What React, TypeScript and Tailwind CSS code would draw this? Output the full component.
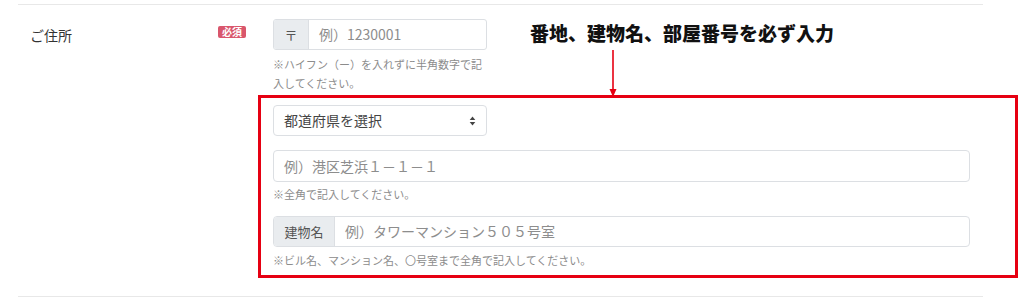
import React from "react";

const font = { fontFamily: '"Noto Sans CJK JP", "Noto Sans", sans-serif' };

const Help = ({ children }: { children: React.ReactNode }) => (
  <p className="text-[11px] leading-[19px] text-[#8c8c8c]">{children}</p>
);

const SelectArrows = () => (
  <svg width="7" height="10" viewBox="0 0 7 10" fill="#444">
    <path d="M3.5 0.5 L6.3 4 H0.7 Z" />
    <path d="M3.5 9.5 L6.3 6 H0.7 Z" />
  </svg>
);

const App = () => {
  return (
    <div
      className="relative w-[1024px] h-[299px] bg-white overflow-hidden text-[#333]"
      style={font}
    >
      <div className="ml-[18px] w-[965px] mt-[4px] border-t border-[#e8e8e8]" />

      <div className="flex ml-[18px] w-[965px] pt-[14px] pb-[18px]">
        {/* label column */}
        <div className="w-[240px] flex justify-between pl-[12px] pr-[12px]">
          <span className="mt-[6px] text-[14px] leading-[21px] text-[#333]">
            ご住所
          </span>
          <span className="mt-[7px] h-[12px] w-[28px] rounded-[2px] bg-[#d9566c] text-white text-[10px] leading-[12px] font-bold flex items-center justify-center">
            必須
          </span>
        </div>

        {/* field column */}
        <div className="flex-1 pl-[15px] pr-[13px]">
          <div className="w-[214px]">
            <div className="flex h-[31px] border border-[#dcdfe3] rounded-[3px] overflow-hidden">
              <div className="w-[35px] bg-[#e9ecef] border-r border-[#dcdfe3] flex items-center justify-center text-[13px] text-[#555]">
                〒
              </div>
              <div className="flex-1 flex items-center pl-[10px] text-[14px] text-[#8d8d8d]">
                例）1230001
              </div>
            </div>
            <div className="mt-[5px]">
              <Help>※ハイフン（ー）を入れずに半角数字で記入してください。</Help>
            </div>
          </div>

          {/* annotated block */}
          <div className="-ml-[15px] -mr-[48px] mt-[2px] border-[3px] border-[#e60012] pl-[12px] pr-[45px] pt-[7px] pb-[5px]">
            <div className="w-[214px] h-[31px] border border-[#dcdfe3] rounded-[4px] flex items-center justify-between pl-[10px] pr-[10px]">
              <span className="text-[14px] text-[#444]">都道府県を選択</span>
              <SelectArrows />
            </div>

            <div className="mt-[14px] h-[32px] border border-[#dcdfe3] rounded-[4px] flex items-center pl-[10px] text-[14px] text-[#8d8d8d]">
              例）港区芝浜１－１－１
            </div>
            <div className="mt-[3px]">
              <Help>※全角で記入してください。</Help>
            </div>

            <div className="mt-[12px] flex h-[31px] border border-[#dcdfe3] rounded-[4px] overflow-hidden">
              <div className="w-[61px] bg-[#e9ecef] border-r border-[#dcdfe3] flex items-center justify-center text-[13px] text-[#555]">
                建物名
              </div>
              <div className="flex-1 flex items-center pl-[10px] text-[14px] text-[#8d8d8d]">
                例）タワーマンション５０５号室
              </div>
            </div>
            <div className="mt-[4px]">
              <Help>※ビル名、マンション名、〇号室まで全角で記入してください。</Help>
            </div>
          </div>
        </div>
      </div>

      <div className="ml-[18px] w-[965px] border-t border-[#e8e8e8]" />

      {/* annotation */}
      <div className="absolute left-[530px] top-[19px] text-[19px] leading-[28px] font-black text-[#111] whitespace-nowrap">
        番地、建物名、部屋番号を必ず入力
      </div>
      <svg
        className="absolute left-[608px] top-[50px]"
        width="10"
        height="47"
        viewBox="0 0 10 47"
      >
        <line x1="5" y1="0" x2="5" y2="40" stroke="#e60012" strokeWidth="1.6" />
        <path d="M1.5 39 L8.5 39 L5 47 Z" fill="#e60012" />
      </svg>
    </div>
  );
};

export default App;
